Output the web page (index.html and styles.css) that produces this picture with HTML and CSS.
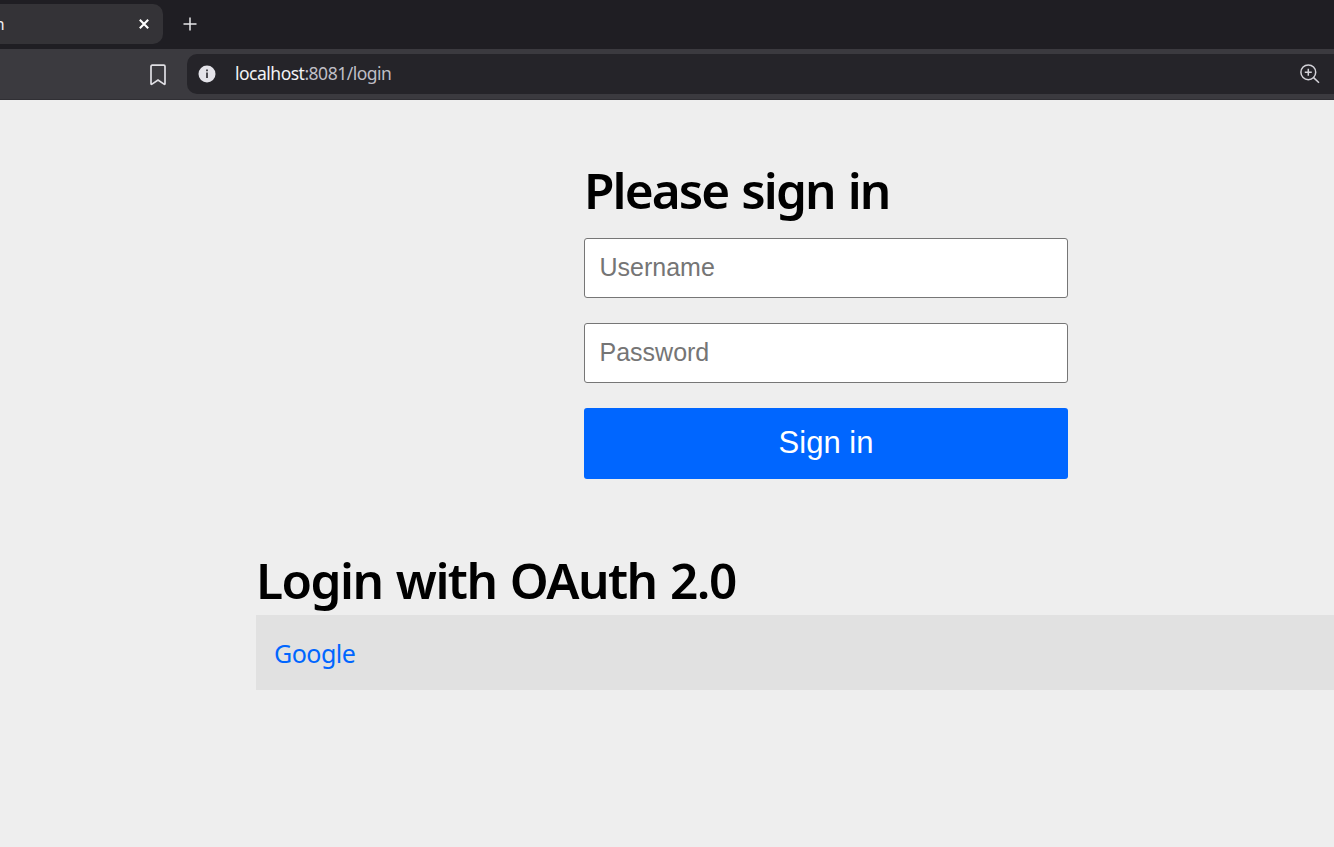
FILE: index.html
```html
<!DOCTYPE html>
<html lang="en">
<head>
<meta charset="utf-8">
<title>Please sign in</title>
<link rel="stylesheet" href="styles.css">
</head>
<body>
<header class="tabs">
  <div class="tab">
    <span class="tab-title">n</span>
    <svg class="close" width="12" height="12" viewBox="0 0 12 12"><path d="M1.8 1.8l8.4 8.4M10.2 1.8L1.8 10.2"/></svg>
  </div>
  <svg class="plus" width="14" height="14" viewBox="0 0 14 14"><path d="M7 .5v13M.5 7h13"/></svg>
</header>
<div class="toolbar">
  <svg class="bookmark" width="18" height="22" viewBox="0 0 18 22"><path d="M3.200 1.200h11.600q1.200 0 1.200 1.200v17.200q0 1.200-1 .5L9 16l-6 4.100q-1 .7-1-.5V2.400q0-1.200 1.200-1.200z"/></svg>
  <div class="address">
    <svg class="info" width="18" height="18" viewBox="0 0 18 18"><circle cx="9" cy="9" r="8.500"/><path d="M8 4.500h2v1.800H8zM8 7.600h2v5.400H8z"/></svg>
    <span class="url"><span class="host">localhost</span>:8081/login</span>
    <svg class="zoom" width="20" height="20" viewBox="0 0 20 20"><circle cx="8.300" cy="8.300" r="7.400"/><path d="M13.600 13.600l5.400 5.200M8.300 4.800v7M4.800 8.300h7"/></svg>
  </div>
</div>
<main class="page">
  <form class="signin">
    <h2 class="heading">Please sign in</h2>
    <input class="field" type="text" placeholder="Username">
    <input class="field" type="password" placeholder="Password">
    <button class="submit" type="button">Sign in</button>
  </form>
  <section class="oauth">
    <h2 class="heading oauth-heading">Login with OAuth 2.0</h2>
    <div class="provider"><a class="link" href="#">Google</a></div>
  </section>
</main>
</body>
</html>
```
FILE: styles.css
```css
* { box-sizing: border-box; }
body {
  margin: 0;
  height: 847px;
  overflow: hidden;
  background: #eee;
  font-family: "Noto Sans", sans-serif;
}
svg { display: block; flex: none; fill: none; }
.tabs {
  display: flex;
  align-items: center;
  height: 49px;
  padding-bottom: 1px;
  background: #1f1e23;
}
.tab {
  display: flex;
  align-items: center;
  justify-content: space-between;
  width: 163px;
  height: 40px;
  padding-right: 13.5px;
  border-radius: 0 10px 10px 0;
  background: #343337;
}
.tab-title { margin-left: -5px; font-size: 15.5px; color: #f4f4f5; }
.close { stroke: #fff; stroke-width: 2.1; }
.plus { margin-left: 19.500px; stroke: #e6e6e9; stroke-width: 1.5; }
.toolbar {
  display: flex;
  align-items: center;
  height: 51px;
  padding-left: 149px;
  border-bottom: 1px solid #302f34;
  background: #3b3a3f;
}
.bookmark { margin: 1px 0 0 .4px; stroke: #e0dfe4; stroke-width: 1.7; }
.address {
  display: flex;
  align-items: center;
  flex: 1;
  height: 40px;
  margin-left: 19.6px;
  padding: 0 14px 0 11px;
  border-radius: 10px 0 0 10px;
  background: #252429;
}
.info { margin-top: .5px; }
.info circle { fill: #e4e3e9; }
.info path { fill: #4b4a50; }
.url { margin: -2px 0 0 19px; font-size: 17.5px; letter-spacing: -.5px; color: #bfbec5; }
.host { color: #f2f2f5; }
.zoom { margin-left: auto; stroke: #d3d2d8; stroke-width: 1.5; }
.page { padding-top: 56px; }
.signin {
  display: flex;
  flex-direction: column;
  width: 484px;
  margin-left: 584px;
}
.heading {
  margin: 0 0 14px;
  font-size: 49.5px;
  font-weight: 600;
  line-height: 68px;
  white-space: nowrap;
  letter-spacing: -1.9px;
  word-spacing: 2px;
  color: #000;
}
.field {
  height: 60px;
  margin: 0 0 25px;
  padding: 0 14px 2px 14.5px;
  border: 1px solid #767676;
  border-radius: 3px;
  background: #fff;
  font: 25px "Liberation Sans", sans-serif;
}
.field::placeholder { color: #757575; }
.submit {
  height: 71px;
  padding: 0 0 2px;
  border: 0;
  border-radius: 3px;
  background: #06f;
  font: 31px "Liberation Sans", sans-serif;
  color: #fff;
}
.oauth { margin: 67px 0 0 256px; }
.oauth-heading { margin-bottom: 1px; letter-spacing: -1.53px; }
.provider {
  display: flex;
  align-items: center;
  height: 75px;
  padding: 1px 18px 0;
  background: #e1e1e1;
}
.link { font-size: 25px; letter-spacing: -.5px; color: #06f; text-decoration: none; }
```
